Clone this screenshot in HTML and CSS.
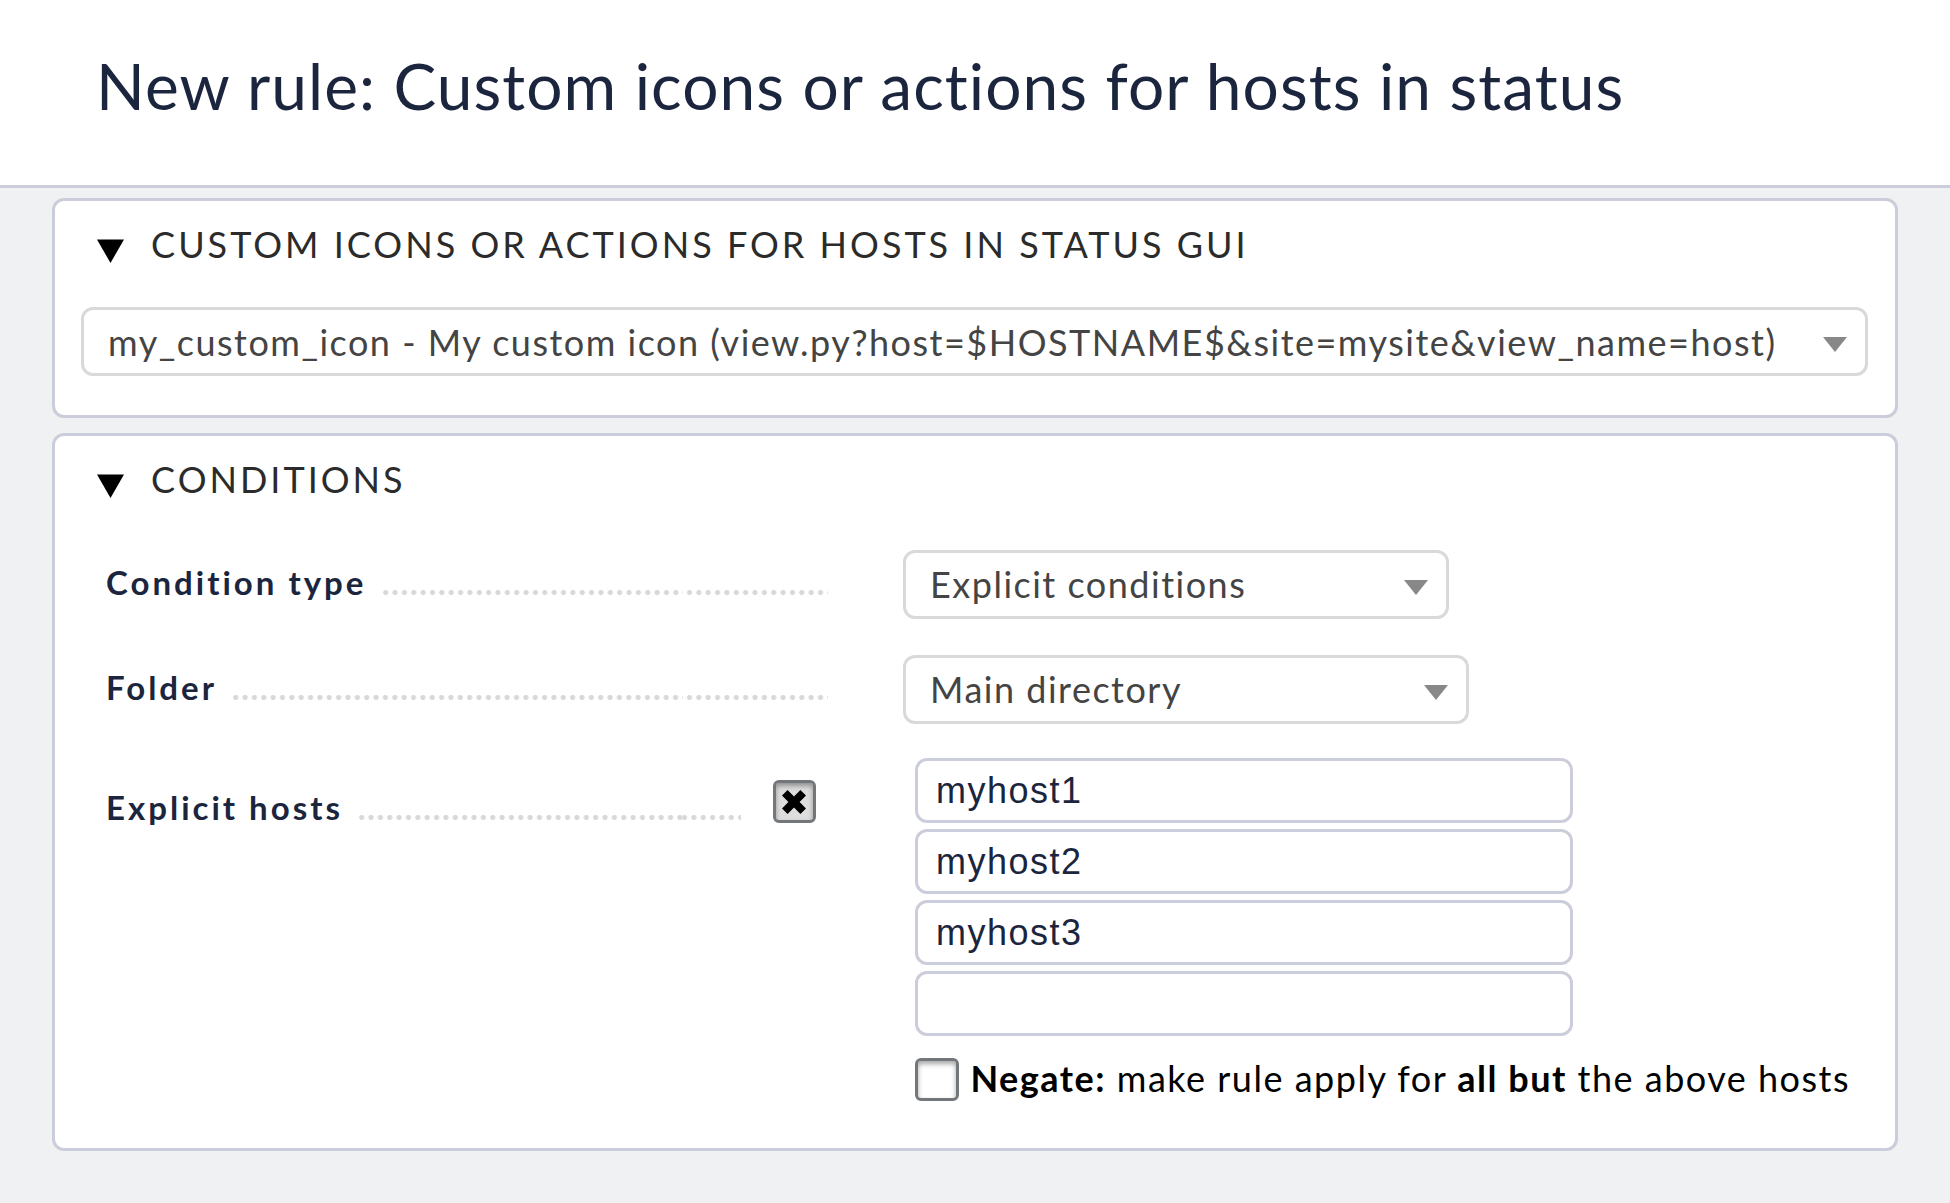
FILE: index.html
```html
<!DOCTYPE html>
<html lang="en">
<head>
<meta charset="utf-8">
<title>New rule: Custom icons or actions for hosts in status</title>
<link rel="stylesheet" href="styles.css">
</head>
<body>
<header class="page-header">
  <h1 class="page-title">New rule: Custom icons or actions for hosts in status</h1>
</header>
<main class="content">
  <section class="panel">
    <h2 class="panel-title">
      <svg class="toggle" viewBox="0 0 27 24"><path d="M0 0.4H27L13.5 24Z"/></svg>
      CUSTOM ICONS OR ACTIONS FOR HOSTS IN STATUS GUI
    </h2>
    <div class="select select-wide">
      <span>my_custom_icon - My custom icon (view.py?host=$HOSTNAME$&amp;site=mysite&amp;view_name=host)</span>
      <svg class="arrow" viewBox="0 0 24 15"><path d="M0 0H24L12 15Z"/></svg>
    </div>
  </section>

  <section class="panel panel-conditions">
    <h2 class="panel-title">
      <svg class="toggle" viewBox="0 0 27 24"><path d="M0 0.4H27L13.5 24Z"/></svg>
      CONDITIONS
    </h2>
    <div class="form">
      <div class="row">
        <div class="legend">
          <span class="label label-type">Condition type</span>
          <span class="dots dots-fill"></span>
          <span class="dots dots-tail"></span>
        </div>
        <div class="select select-type">
          <span>Explicit conditions</span>
          <svg class="arrow" viewBox="0 0 24 15"><path d="M0 0H24L12 15Z"/></svg>
        </div>
      </div>
      <div class="row">
        <div class="legend">
          <span class="label label-folder">Folder</span>
          <span class="dots dots-fill"></span>
          <span class="dots dots-tail"></span>
        </div>
        <div class="select select-folder">
          <span>Main directory</span>
          <svg class="arrow" viewBox="0 0 24 15"><path d="M0 0H24L12 15Z"/></svg>
        </div>
      </div>
      <div class="row row-hosts">
        <div class="legend">
          <span class="label label-hosts">Explicit hosts</span>
          <span class="dots dots-fill"></span>
          <span class="dots dots-tail dots-short"></span>
          <span class="checkbox checked">
            <svg class="cross" viewBox="0 0 24 24"><path d="M5.6 0L12 6.4L18.4 0L24 5.6L17.6 12L24 18.4L18.4 24L12 17.6L5.6 24L0 18.4L6.4 12L0 5.6Z"/></svg>
          </span>
        </div>
        <div class="hosts">
          <div class="input">myhost1</div>
          <div class="input">myhost2</div>
          <div class="input">myhost3</div>
          <div class="input"></div>
          <div class="negate">
            <span class="checkbox"></span>
            <span><b>Negate:</b> make rule apply for <b>all but</b> the above hosts</span>
          </div>
        </div>
      </div>
    </div>
  </section>
</main>
</body>
</html>
```
FILE: styles.css
```css
* { box-sizing: border-box; }

body {
  margin: 0;
  min-height: 100vh;
  background: #f0f1f3;
  color: #000;
  font-family: Lato, sans-serif;
  font-size: 36px;
  line-height: 44px;
  letter-spacing: 1.5px;
  white-space: nowrap;
}

.page-header {
  height: 188px;
  padding: 48px 0 0 96px;
  background: #fff;
  border-bottom: 3px solid #cccddb;
}

.page-title {
  margin: 0;
  color: #1b253e;
  font-size: 64px;
  font-weight: 400;
  line-height: 76px;
  letter-spacing: 1.06px;
}

.content {
  display: flex;
  flex-direction: column;
  gap: 15px;
  padding: 10px 52px 0;
}

.panel {
  height: 220px;
  padding: 21px 26px 0;
  background: #fff;
  border: 3px solid #cccddb;
  border-radius: 12px;
}

.panel-conditions { height: 718px; }

.panel-title {
  display: flex;
  align-items: center;
  gap: 26.8px;
  margin: 0;
  padding-left: 16.3px;
  color: #2b2b2b;
  font-size: 36px;
  font-weight: 400;
  letter-spacing: 3px;
}

.toggle {
  width: 27px;
  height: 24px;
  margin-top: 14px;
  fill: #000;
}

.select {
  display: flex;
  align-items: center;
  justify-content: space-between;
  height: 69px;
  padding: 0 18px 2px 24px;
  color: #444;
  background: #fff;
  border: 3px solid #d9d9d9;
  border-radius: 12px;
}

.select-wide {
  width: 1787px;
  margin-top: 41px;
  padding-bottom: 0;
}

.select-type { width: 546px; }
.select-folder { width: 566px; }

.arrow {
  width: 24px;
  height: 15px;
  margin-top: 7px;
  fill: #888;
}

.select-wide .arrow { margin-top: 5px; }

.form {
  display: flex;
  flex-direction: column;
  gap: 36px;
  margin-top: 49px;
  padding-left: 25px;
}

.row {
  display: grid;
  grid-template-columns: 797px auto;
  align-items: start;
  justify-content: start;
}

.row-hosts { margin-top: -2px; }

.legend {
  display: flex;
  align-items: flex-start;
  width: 722px;
  padding-top: 12px;
}

.row-hosts .legend {
  width: 710px;
  padding-top: 29px;
}

.label {
  color: #1b253e;
  font-size: 33px;
  font-weight: 700;
  line-height: 40px;
  letter-spacing: 3px;
}

.label-type { width: 275px; }
.label-folder { width: 125px; }
.label-hosts { width: 251.2px; }

.dots {
  height: 6px;
  margin-top: 28px;
  background: radial-gradient(circle at 50% 2.5px, #d8d8da 2.2px, transparent 2.9px) 0 0 / 9.365px 6px repeat-x;
}

.dots-fill { flex: 1; }

.dots-tail {
  width: 145px;
  background-position-x: 1.8px;
}

.dots-short {
  width: 58.6px;
  margin-right: 32.4px;
  background-position-x: -2.2px;
}

.checkbox {
  display: flex;
  flex: none;
  align-items: center;
  justify-content: center;
  width: 44px;
  height: 43px;
  background: #fff;
  border: 3px solid #73777b;
  border-radius: 6px;
  box-shadow: inset 0 3px 5px rgba(0, 0, 0, 0.35);
}

.checkbox.checked {
  width: 43px;
  margin-top: -7px;
  background: #dedede;
}

.cross {
  width: 24px;
  height: 24px;
  margin-right: 2px;
}

.hosts {
  display: flex;
  flex-direction: column;
  gap: 6px;
  padding-left: 12px;
}

.input {
  width: 658px;
  height: 65px;
  padding-left: 18px;
  color: #1b253e;
  background: #fff;
  border: 3px solid #cccddb;
  border-radius: 12px;
  font-family: "Liberation Sans", sans-serif;
  line-height: 59px;
}

.negate {
  display: flex;
  align-items: flex-start;
  gap: 11.4px;
  margin-top: 14px;
}

.negate .checkbox { margin-top: 2px; }
```
